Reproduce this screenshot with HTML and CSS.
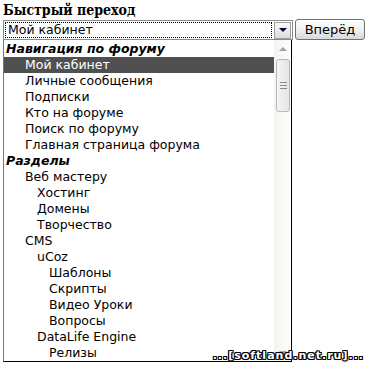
FILE: index.html
```html
<!DOCTYPE html>
<html lang="ru">
<head>
    <meta charset="UTF-8">
    <meta name="viewport" content="width=device-width, initial-scale=1.0">
    <title>Быстрый переход</title>
    <link rel="stylesheet" href="styles.css">
</head>
<body>
    <div class="jump">
        <div class="jump-title">Быстрый переход</div>

        <div class="jump-row">
            <div class="select">
                <span class="select-value">Мой кабинет</span>
                <span class="select-arrow"><span class="tri-down"></span></span>
            </div>
            <button class="go">Вперёд</button>
        </div>

        <div class="list">
            <ul class="options">
                <li class="group">Навигация по форуму</li>
                <li class="lvl1 selected">Мой кабинет</li>
                <li class="lvl1">Личные сообщения</li>
                <li class="lvl1">Подписки</li>
                <li class="lvl1">Кто на форуме</li>
                <li class="lvl1">Поиск по форуму</li>
                <li class="lvl1">Главная страница форума</li>
                <li class="group">Разделы</li>
                <li class="lvl1">Веб мастеру</li>
                <li class="lvl2">Хостинг</li>
                <li class="lvl2">Домены</li>
                <li class="lvl2">Творчество</li>
                <li class="lvl1">CMS</li>
                <li class="lvl2">uCoz</li>
                <li class="lvl3">Шаблоны</li>
                <li class="lvl3">Скрипты</li>
                <li class="lvl3">Видео Уроки</li>
                <li class="lvl3">Вопросы</li>
                <li class="lvl2">DataLife Engine</li>
                <li class="lvl3">Релизы</li>
            </ul>
            <div class="scrollbar">
                <div class="sb-btn"><span class="tri-up"></span></div>
                <div class="sb-track">
                    <div class="sb-thumb">
                        <span class="grip"></span>
                        <span class="grip"></span>
                        <span class="grip"></span>
                    </div>
                </div>
                <div class="sb-btn"><span class="tri-down light"></span></div>
            </div>
        </div>

        <div class="watermark">...[softland.net.ru]...</div>
    </div>
</body>
</html>
```

FILE: styles.css
```css
body {
    margin: 0;
    background: #fff;
    color: #000;
    font-family: 'DejaVu Sans', sans-serif;
}

.jump {
    position: relative;
    padding: 2px 0 0 3px;
    height: 364px;
}

.jump-title {
    font-family: 'DejaVu Serif', 'Liberation Serif', serif;
    font-stretch: condensed;
    font-weight: bold;
    font-size: 14px;
    line-height: 16px;
    height: 17px;
}

.jump-row {
    display: flex;
    gap: 2px;
    align-items: flex-start;
}

.select {
    width: 286px;
    height: 18px;
    border: 1px solid #8a8a8a;
    display: flex;
    align-items: center;
    padding: 0 1px 0 1px;
    margin-top: 1px;
}

.select-value {
    flex: 1;
    height: 14px;
    border: 1px dotted #000;
    font-size: 12.5px;
    line-height: 14px;
    padding-left: 2px;
    margin-right: 2px;
}

.select-arrow {
    width: 17px;
    height: 17px;
    border: 1px solid #a0a0a0;
    background: linear-gradient(#fafafa, #dcdcdc);
    display: flex;
    align-items: center;
    justify-content: center;
    box-sizing: border-box;
}

.tri-down {
    width: 0;
    height: 0;
    border-left: 4px solid transparent;
    border-right: 4px solid transparent;
    border-top: 4px solid #000033;
}

.tri-down.light {
    border-top-color: #9aa4b4;
}

.tri-up {
    width: 0;
    height: 0;
    border-left: 4px solid transparent;
    border-right: 4px solid transparent;
    border-bottom: 4px solid #9aa4b4;
}

.go {
    width: 70px;
    height: 21px;
    font-family: 'DejaVu Sans', sans-serif;
    font-size: 13px;
    border: 1px solid #707070;
    border-radius: 3px;
    background: linear-gradient(#ffffff, #ececec 60%, #d8d8d8);
    padding: 0;
    color: #000;
}

.list {
    width: 287px;
    height: 321px;
    border-left: 1px solid #777;
    border-right: 1px solid #000;
    border-bottom: 1px solid #000;
    display: flex;
    overflow: hidden;
}

.options {
    list-style: none;
    margin: 0;
    padding: 1px 0 0 0;
    flex: 1;
    font-size: 12.5px;
}

.options li {
    height: 16px;
    line-height: 16px;
    white-space: nowrap;
}

.options .group {
    font-weight: bold;
    font-style: italic;
    padding-left: 2px;
}

.options .lvl1 { padding-left: 21px; }
.options .lvl2 { padding-left: 33px; }
.options .lvl3 { padding-left: 45px; }

.options .selected {
    background: #505050;
    color: #fff;
}

.scrollbar {
    width: 17px;
    display: flex;
    flex-direction: column;
    background: linear-gradient(90deg, #f3f3ef, #fefefe);
}

.sb-btn {
    height: 17px;
    display: flex;
    align-items: center;
    justify-content: center;
}

.sb-track {
    flex: 1;
    padding-top: 2px;
}

.sb-thumb {
    margin: 0 1px 0 2px;
    height: 51px;
    border: 1px solid #b8b8b8;
    border-radius: 3px;
    background: linear-gradient(90deg, #f4f4f4, #e4e4e4);
    display: flex;
    flex-direction: column;
    align-items: center;
    justify-content: center;
    gap: 2px;
}

.grip {
    width: 7px;
    height: 1px;
    background: #8a8a8a;
}

.watermark {
    position: absolute;
    right: 3px;
    bottom: 4px;
    font-family: 'DejaVu Sans', sans-serif;
    font-weight: bold;
    font-size: 11px;
    letter-spacing: 1px;
    line-height: 12px;
    color: #fff;
    text-shadow: 1px 0 #000, -1px 0 #000, 0 1px #000, 0 -1px #000,
                 1px 1px #000, -1px -1px #000, 1px -1px #000, -1px 1px #000;
}
```
